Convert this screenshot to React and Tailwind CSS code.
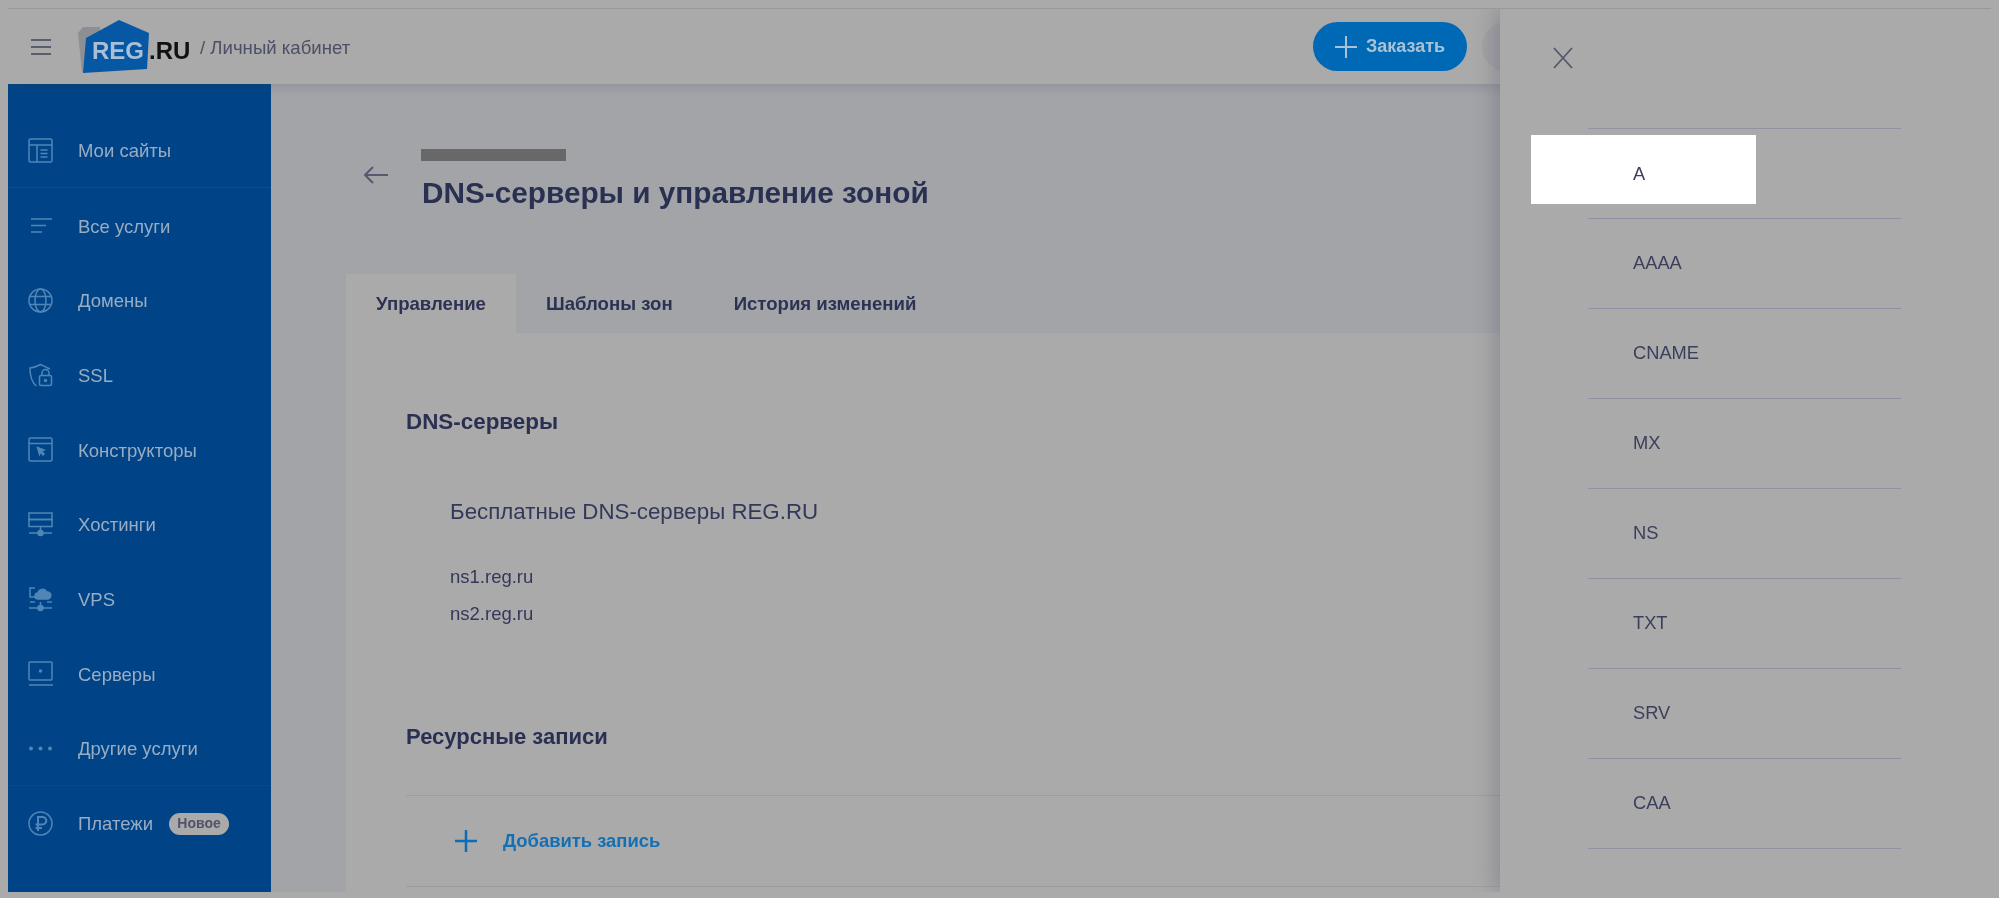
import React from 'react';

const NAV = [
  { label: 'Мои сайты', icon: 'sites' },
  { label: 'Все услуги', icon: 'list' },
  { label: 'Домены', icon: 'globe' },
  { label: 'SSL', icon: 'ssl' },
  { label: 'Конструкторы', icon: 'builder' },
  { label: 'Хостинги', icon: 'hosting' },
  { label: 'VPS', icon: 'vps' },
  { label: 'Серверы', icon: 'server' },
  { label: 'Другие услуги', icon: 'dots' },
];

const RECORDS = ['AAAA', 'CNAME', 'MX', 'NS', 'TXT', 'SRV', 'CAA'];

function NavIcon({ name }) {
  const parts = {
    sites: (
      <>
        <rect x="1" y="1" width="23" height="23" rx="1.5" />
        <path d="M1 7h23M9 7v17M12.5 12h7M12.5 15.5h7M12.5 19h7" />
      </>
    ),
    list: <path d="M3 6h21M3 12.5h15M3 19h11" />,
    globe: (
      <>
        <circle cx="12.5" cy="12.5" r="11.5" />
        <ellipse cx="12.5" cy="12.5" rx="5.5" ry="11.5" />
        <path d="M2 8.5h21M2 16.5h21" />
      </>
    ),
    ssl: (
      <>
        <path d="M22 6C18 4 15 2.5 12.5 1.5 9 3.5 6 4.5 2 5c0 8 1 14 6.500 18" />
        <rect x="11.500" y="12.500" width="12" height="10" rx="1.500" />
        <path d="M14 12.500V10a3.500 3.500 0 0 1 7 0v2.500" />
        <circle cx="17.500" cy="17.500" r="1" />
      </>
    ),
    builder: (
      <>
        <rect x="1" y="1" width="23" height="23" rx="1.500" />
        <path d="M1 6.500h23" />
        <path d="M9.500 10.500l6.500 2.500-2.500 1 2.500 3-1 1-2.500-3-1 2.500z" fill="currentColor" />
      </>
    ),
    hosting: (
      <>
        <rect x="1" y="1" width="23" height="6.500" />
        <rect x="1" y="7.500" width="23" height="7" />
        <path d="M12.500 14.500V20M1 21h23" />
        <circle cx="12.500" cy="21" r="2.500" fill="currentColor" />
      </>
    ),
    vps: (
      <>
        <path d="M7 10H2V1h5M19 15h5M2 15h5M12.500 15v5M1 21h23" />
        <path d="M10 12a3 3 0 0 1 0-6 4.500 4.500 0 0 1 8.500-1A3.500 3.500 0 0 1 20 12z" fill="currentColor" />
        <circle cx="12.500" cy="21" r="2.500" fill="currentColor" />
      </>
    ),
    server: (
      <>
        <rect x="1" y="1" width="23" height="18" rx="1" />
        <path d="M1 24h24" />
        <circle cx="12.500" cy="10" r="1" fill="currentColor" />
      </>
    ),
    dots: (
      <>
        <circle cx="3" cy="12.500" r="2" fill="currentColor" stroke="none" />
        <circle cx="12.500" cy="12.500" r="2" fill="currentColor" stroke="none" />
        <circle cx="22" cy="12.500" r="2" fill="currentColor" stroke="none" />
      </>
    ),
    ruble: (
      <>
        <circle cx="12.500" cy="12.500" r="11.500" />
        <path d="M10 20V6h4.500a3.500 3.500 0 0 1 0 7.500H7.500M7.500 17H14" strokeWidth="2" />
      </>
    ),
  };
  return (
    <svg width="25" height="25" viewBox="0 0 25 25" fill="none" stroke="currentColor" strokeWidth="1.500" className="mt-[2px] shrink-0 text-[#4f86b6]">
      {parts[name]}
    </svg>
  );
}

function NavRow({ label, icon, children, className = '' }) {
  return (
    <div className={`flex h-[74.67px] items-center pl-5 ${className}`}>
      <NavIcon name={icon} />
      <span className="ml-[25px] pt-[3px] text-[18.5px] text-[#98acc3]">{label}</span>
      {children}
    </div>
  );
}

function Logo() {
  return (
    <svg width="125" height="60" viewBox="76 18 125 60" className="shrink-0">
      <path d="M78 33l5-6 17 0 0 8-15 38-3-1z" fill="#8e8f95" />
      <path d="M86 38L119 20l30 13-2 36-64 4z" fill="#0758a4" />
      <text x="92" y="59" fontSize="24" fontWeight="700" fill="#a9bfd6">REG</text>
      <text x="149" y="59" fontSize="24" fontWeight="700" fill="#111">.RU</text>
    </svg>
  );
}

export default function App() {
  return (
    <div className="h-[898px] w-[1999px] overflow-hidden bg-[#aaaaaa] px-2 pb-[6px] pt-2 blur-[0.4px] [font-family:'Liberation_Sans',sans-serif]">
      <div className="relative flex h-full flex-col overflow-hidden border-t border-[#98989c]">
        {/* header */}
        <header className="relative z-10 flex h-[75px] shrink-0 items-center bg-[#aaaaaa] shadow-[0_2px_10px_rgba(60,60,80,0.2)]">
          <div className="ml-[23px] flex w-5 flex-col gap-[5px]">
            <div className="h-[2px] bg-[#5a5d72]" />
            <div className="h-[2px] bg-[#5a5d72]" />
            <div className="h-[2px] bg-[#5a5d72]" />
          </div>
          <div className="ml-[25px] mt-[3px]">
            <Logo />
          </div>
          <span className="-ml-[1px] mt-[3px] text-[18.6px] text-[#4c4f66]">/ Личный кабинет</span>
          <div className="ml-auto mr-[460px] flex items-center gap-[15px]">
            <button className="flex h-[49px] w-[154px] items-center justify-center gap-[9px] rounded-full bg-[#0069b5] text-[18px] font-bold text-[#a8c2d8]">
              <svg width="22" height="22" viewBox="0 0 22 22" stroke="currentColor" strokeWidth="2">
                <path d="M11 0v22M0 11h22" />
              </svg>
              Заказать
            </button>
            <div className="size-[49px] rounded-full bg-[#a3a3a5]" />
          </div>
        </header>

        <div className="flex min-h-0 flex-1">
          {/* sidebar */}
          <aside className="flex w-[263px] shrink-0 flex-col bg-[#004487] pt-[29px]">
            {NAV.map((item, i) => (
              <NavRow key={item.label} {...item} className={i === 0 ? 'border-b border-[#0a4f94]' : ''} />
            ))}
            <NavRow label="Платежи" icon="ruble" className="border-t border-[#07498e]">
              <span className="ml-4 mt-[2px] flex h-[22px] w-[60px] items-center justify-center rounded-full bg-[#aaaaaa] text-[14px] font-bold text-[#50536a]">
                Новое
              </span>
            </NavRow>
          </aside>

          {/* main */}
          <main className="min-w-0 flex-1 overflow-hidden bg-[#a3a4a8] pl-[75px] pt-[65px]">
            <div className="flex h-[125px] items-start pl-[18px]">
              <svg width="24" height="18" viewBox="0 0 24 18" fill="none" stroke="#565970" strokeWidth="2" className="mt-[17px] shrink-0">
                <path d="M24 9H1M9 1L1 9l8 8" />
              </svg>
              <div className="ml-[33px]">
                <div className="h-3 w-[145px] bg-[#686868]" />
                <h1 className="ml-[1px] mt-[14px] text-[29.75px] font-bold leading-[36px] text-[#2a3052]">
                  DNS-серверы и управление зоной
                </h1>
              </div>
            </div>

            <div className="flex h-[59px] text-[18.6px] font-bold text-[#2c3254]">
              <div className="flex h-full w-[170px] items-center justify-center bg-[#aaaaaa] pt-[1px]">Управление</div>
              <div className="ml-[30px] pt-[16px]">Шаблоны зон</div>
              <div className="ml-[61px] pt-[16px]">История изменений</div>
            </div>

            <div className="h-[600px] bg-[#aaaaaa] pl-[60px] pt-[75px]">
              <h2 className="text-[22.4px] font-bold leading-[28px] text-[#2a3052]">DNS-серверы</h2>
              <div className="ml-[44px] mt-[62px] text-[#33385a]">
                <p className="text-[22.3px] leading-[28px]">Бесплатные DNS-серверы REG.RU</p>
                <p className="mt-[37px] text-[18.5px] leading-[28px]">ns1.reg.ru</p>
                <p className="mt-[9px] text-[18.5px] leading-[28px]">ns2.reg.ru</p>
              </div>
              <h2 className="mt-[95px] text-[22px] font-bold leading-[28px] text-[#2a3052]">Ресурсные записи</h2>
              <div className="mt-[44px] border-y border-[#9c9da2]">
                <div className="flex h-[90px] items-center pl-[49px]">
                  <svg width="22" height="22" viewBox="0 0 22 22" stroke="#0a6db8" strokeWidth="2.500" className="shrink-0">
                    <path d="M11 0v22M0 11h22" />
                  </svg>
                  <span className="ml-[26px] text-[18.4px] font-bold text-[#1470b4]">Добавить запись</span>
                </div>
              </div>
            </div>
          </main>
        </div>

        {/* drawer */}
        <div className="absolute bottom-0 right-0 top-0 z-20 w-[491px] bg-[#aaaaaa] pl-[88px] shadow-[-6px_0_20px_rgba(70,72,95,0.3)]">
          <svg width="20" height="22" viewBox="0 0 20 22" fill="none" stroke="#55586c" strokeWidth="1.800" className="-ml-[35px] mt-[38px]">
            <path d="M1 1l18 20M19 1L1 21" />
          </svg>
          <ul className="mt-[59px] w-[313px] border-t border-[#8f92a3] text-[18.3px] text-[#3a3f5c]">
            <li className="relative flex h-[90px] items-center border-b border-[#8f92a3] pl-[45px] pt-[1px]">
              <div className="absolute -left-[57px] top-[6px] h-[69px] w-[225px] bg-white" />
              <span className="relative">A</span>
            </li>
            {RECORDS.map((r) => (
              <li key={r} className="flex h-[90px] items-center border-b border-[#8f92a3] pb-[2px] pl-[45px]">
                {r}
              </li>
            ))}
          </ul>
        </div>
      </div>
    </div>
  );
}
